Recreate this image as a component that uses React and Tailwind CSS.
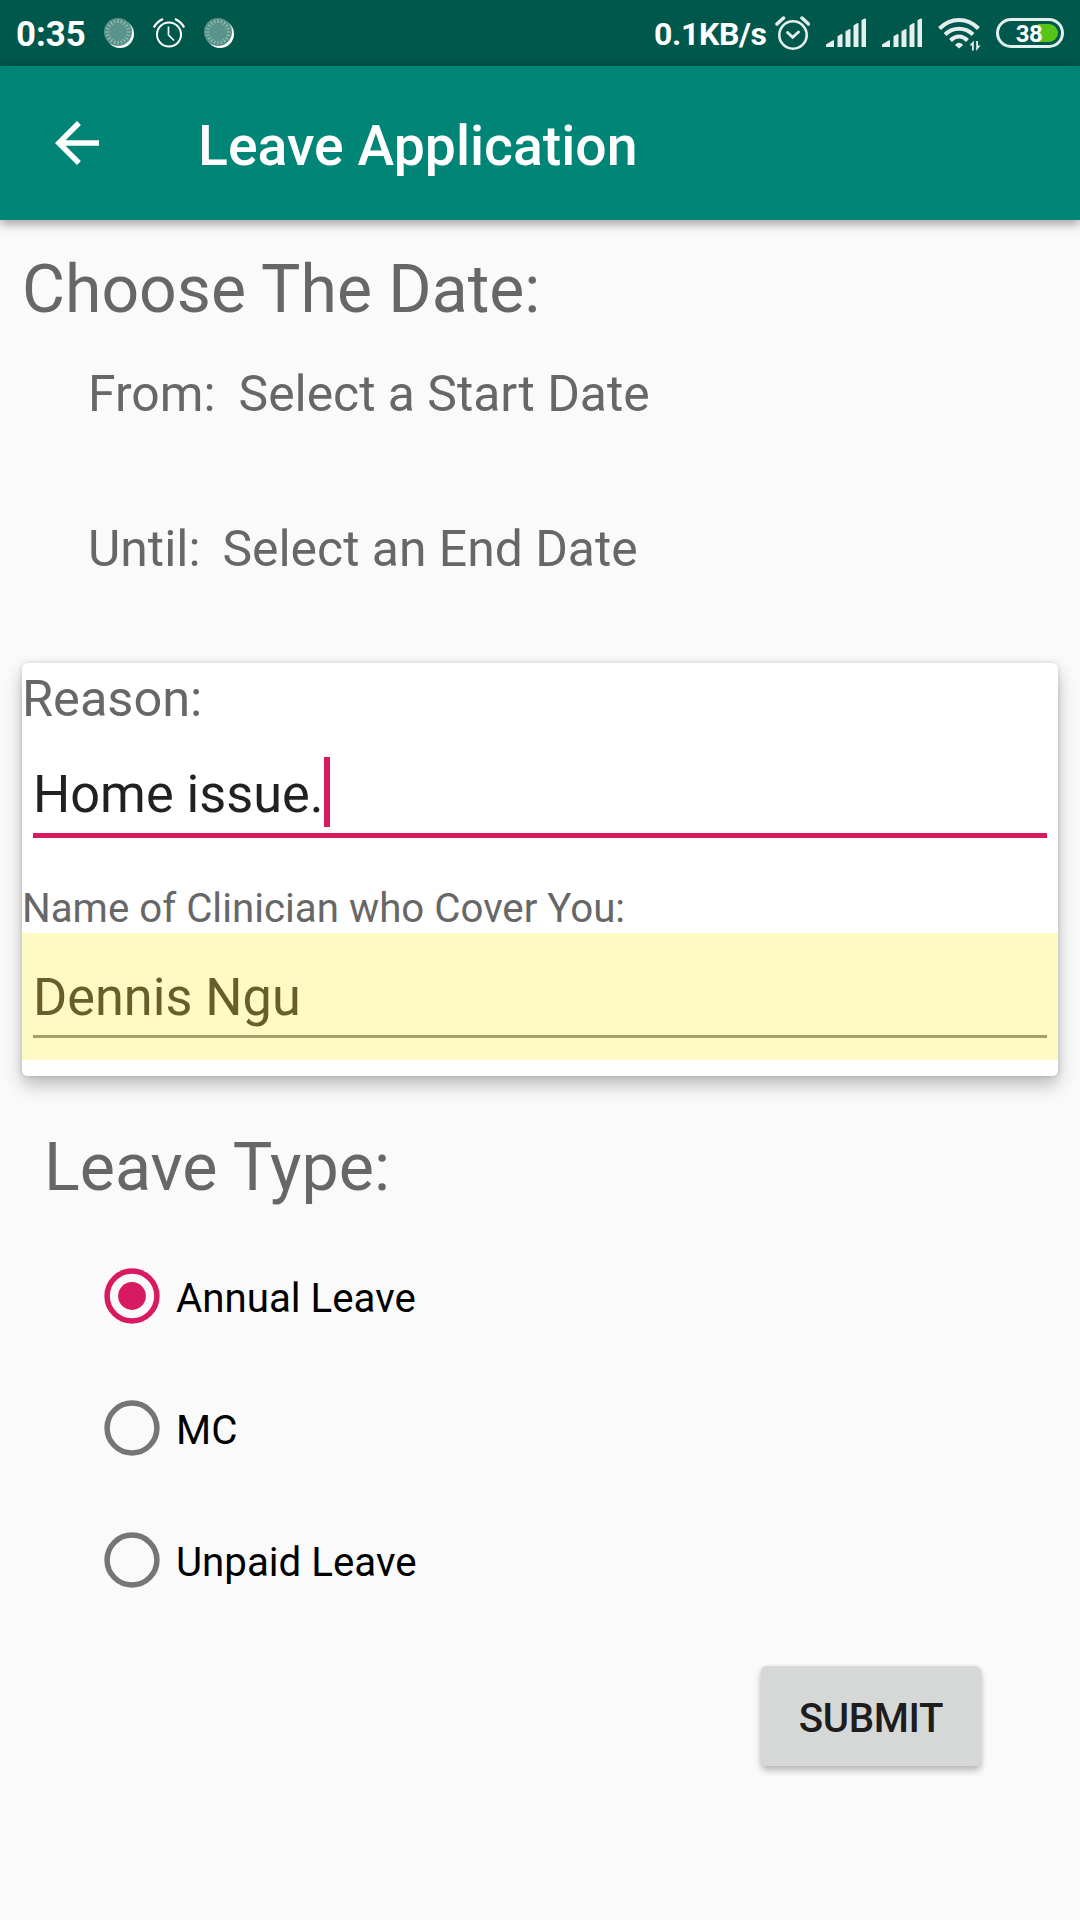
const TICKS = Array.from({ length: 20 }, (_, i) => i * 18);

function SignalBars({ className }) {
  return (
    <svg width="40" height="30" viewBox="0 0 40 30" className={className} fill="#e5efed">
      <path d="M0 29V26.600L6.500 22.500Q8 21.600 8 23V29Z" />
      <path d="M11.500 29V18.200L15 16.300Q16.500 15.500 16.500 17V29Z" />
      <path d="M19.500 29V13.200L23 11.300Q24.500 10.500 24.500 12V29Z" />
      <path d="M27.500 29V7.500L31 5.300Q32.500 4.500 32.500 6V29Z" />
      <path d="M35.500 29V2.200L38.500 .5Q40 0 40 1.500V29Z" />
    </svg>
  );
}

function DialIcon({ className }) {
  return (
    <svg width="30" height="30" viewBox="0 0 30 30" className={className}>
      <circle cx="16" cy="16" r="14" fill="#fff" />
      <circle cx="14" cy="14" r="14" fill="#5a938a" />
      {TICKS.map((a) => (
        <path key={a} d="M14 1.500V5" stroke="#9fc4bd" strokeWidth="1" transform={`rotate(${a} 14 14)`} />
      ))}
    </svg>
  );
}

function StatusBar() {
  return (
    <div className="flex h-[66px] items-start bg-[#00574b] text-white">
      <span className="ml-[16px] mt-[13px] w-[70px] whitespace-nowrap text-[34.800px] font-bold leading-[42px]">0:35</span>
      <DialIcon className="ml-[18px] mt-[18px]" />
      <svg width="32" height="30" viewBox="0 0 32 30" className="ml-[19px] mt-[18px]" fill="none" stroke="#fff">
        <circle cx="16" cy="16.500" r="12" strokeWidth="2" />
        <path d="M15.500 8.500V17L21 22.500" strokeWidth="1.700" />
        <path d="M.8 9.500Q4 3.500 10 1M31.200 9.500Q28 3.500 22 1" strokeWidth="2.200" />
      </svg>
      <DialIcon className="ml-[19px] mt-[18px]" />
      <span className="ml-[420px] mt-[13px] w-[115px] whitespace-nowrap text-[32px] font-bold leading-[42px] tracking-[-0.35px]">0.1KB/s</span>
      <svg width="35" height="35" viewBox="0 0 35 35" className="ml-[6px] mt-[16px]" fill="none" stroke="#e5efed">
        <circle cx="18" cy="19" r="13.700" strokeWidth="2.600" />
        <path d="M12.500 16.500L17.700 21.300L23.500 16" strokeWidth="3" strokeLinecap="round" />
        <path d="M2 8L8.500 2M27 2L33.500 8" strokeWidth="3.500" strokeLinecap="round" />
      </svg>
      <SignalBars className="ml-[16px] mt-[18px]" />
      <SignalBars className="ml-[16px] mt-[18px]" />
      <svg width="43" height="34" viewBox="0 0 43 34" className="ml-[16px] mt-[18px]" fill="none" stroke="#e5efed" strokeWidth="4">
        <path d="M1.500 10.500Q10 2 21 2T40.500 10.500" />
        <path d="M7 16.500Q13 10.700 21 10.700T35 16.500" />
        <path d="M12.500 22.500Q16.500 18.500 21 18.500T29.500 22.500" />
        <path d="M17 27Q21 22.500 25.200 27L21 30.500Z" fill="#e5efed" stroke="none" />
        <path d="M35.800 32.500V22.500L31.500 27.500H34V32.500Z" fill="#e5efed" stroke="none" />
        <path d="M38.200 23V33L42.500 27.500H40V23Z" fill="#e5efed" stroke="none" />
      </svg>
      <div className="relative ml-[15px] mt-[18px] flex h-[30px] w-[68px] items-center justify-center rounded-full border-[3px] border-[#e5efed]">
        <div className="absolute inset-y-[3px] right-[3px] w-[20px] rounded-r-full bg-[#57c41a]" />
        <span className="relative mr-[2px] mt-[2px] text-[24px] font-bold leading-[30px] tracking-[-0.5px]">38</span>
      </div>
    </div>
  );
}

function Radio({ label, checked }) {
  return (
    <label className="flex h-[132px] items-center">
      <svg width="56" height="56" viewBox="0 0 56 56" className={checked ? "text-[#d81b60]" : "text-[#757575]"}>
        <circle cx="28" cy="28" r="24.900" fill="none" stroke="currentColor" strokeWidth="5.500" />
        {checked && <circle cx="28" cy="28" r="13.900" fill="currentColor" />}
      </svg>
      <span className="ml-[16px] mt-[6px] text-[40.250px] leading-[48px] text-black">{label}</span>
    </label>
  );
}

export default function App() {
  return (
    <div className="flex h-[1920px] w-[1080px] flex-col overflow-hidden bg-[#fafafa] font-[Roboto,sans-serif] text-[#676767]">
      <StatusBar />
      <header className="flex h-[154px] items-start bg-[#008577] text-white shadow-[0_4px_10px_rgba(0,0,0,0.36)]">
        <svg width="44" height="44" viewBox="4 4 16 16" className="ml-[55px] mt-[55px]" fill="#fff">
          <path d="M20 11H7.830l5.590-5.590L12 4l-8 8 8 8 1.410-1.410L7.830 13H20v-2z" />
        </svg>
        <h1 className="ml-[99px] mt-[48px] text-[55.350px] font-medium leading-[66px]">Leave Application</h1>
      </header>

      <main className="flex flex-col">
        <h2 className="ml-[22px] mt-[32px] text-[66.100px] leading-[76px]">Choose The Date:</h2>
        <div className="ml-[88px] mt-[36px] flex gap-[23px] text-[49.850px] leading-[60px]">
          <span>From:</span>
          <span>Select a Start Date</span>
        </div>
        <div className="ml-[88px] mt-[95px] flex gap-[22px] text-[49.850px] leading-[60px]">
          <span>Until:</span>
          <span>Select an End Date</span>
        </div>

        <section className="mx-[22px] mt-[84px] flex h-[413px] flex-col rounded-[5.500px] bg-white pt-[6px] shadow-[0_9px_18px_rgba(0,0,0,0.26),0_0_5px_rgba(0,0,0,0.14)]">
          <span className="text-[50.500px] leading-[60px]">Reason:</span>
          <div className="mx-[11px] mt-[28px] flex h-[81px] items-start border-b-[5.500px] border-[#d81b60]">
            <span className="mt-[7px] text-[52.250px] leading-[62px] text-[#212121]">Home issue.</span>
            <span className="h-[70px] w-[6px] bg-[#d81b60]" />
          </div>
          <span className="mt-[47px] text-[40.250px] leading-[48px]">Name of Clinician who Cover You:</span>
          <div className="h-[127px] bg-[#fff9c4] px-[11px] pt-[34px]">
            <div className="h-[71px] border-b-[3px] border-[#a59f68] text-[52.250px] leading-[62px] text-[#665f28]">Dennis Ngu</div>
          </div>
        </section>

        <h2 className="ml-[44px] mt-[53px] text-[66.400px] leading-[76px]">Leave Type:</h2>
        <div className="ml-[104px] mt-[25px] flex flex-col">
          <Radio label="Annual Leave" checked />
          <Radio label="MC" />
          <Radio label="Unpaid Leave" />
        </div>
        <button className="ml-[761px] mt-[40px] flex h-[100px] w-[220px] items-center justify-center rounded-[5.500px] bg-[#d6d7d7] pt-[6px] text-[40.250px] font-medium leading-[48px] tracking-[-0.400px] text-[#1d1d1d] shadow-[0_5px_7px_rgba(0,0,0,0.24),0_0_4px_rgba(0,0,0,0.07)]">
          SUBMIT
        </button>
      </main>
    </div>
  );
}
